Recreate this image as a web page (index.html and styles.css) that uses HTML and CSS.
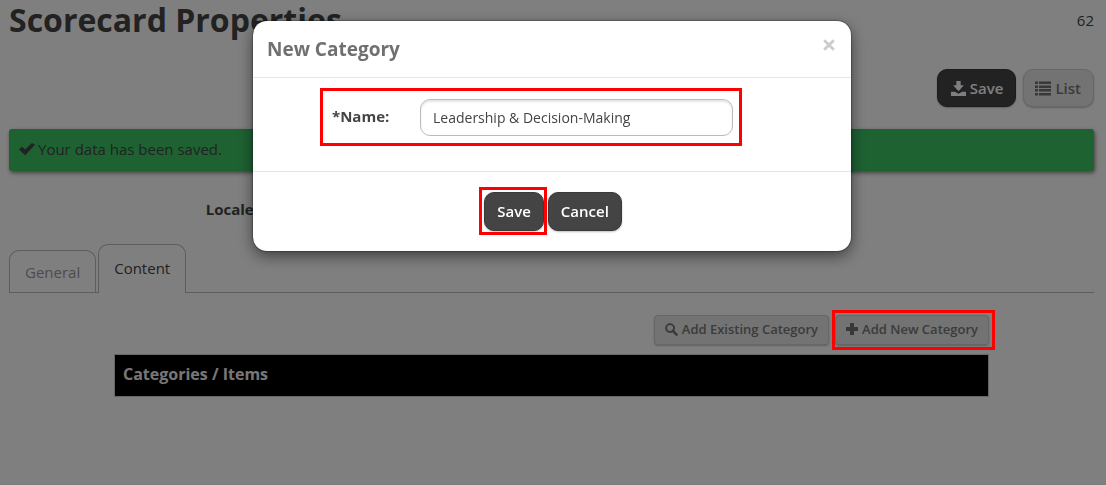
FILE: index.html
```html
<!DOCTYPE html>
<html lang="en">
<head>
<meta charset="utf-8">
<title>Scorecard Properties</title>
<link rel="stylesheet" href="styles.css">
</head>
<body>
<main class="page">
  <header class="page-header">
    <h1 class="page-title">Scorecard Properties</h1>
    <span class="page-count">62</span>
  </header>
  <div class="toolbar">
    <button type="button" class="btn btn-dark btn-save"><svg class="icon" viewBox="0 0 14 14" aria-hidden="true"><path d="M5 0h4v4h3L7 9.500 2 4h3zM0 10h3.500L7 12l3.500-2H14v4H0z"/></svg>Save</button>
    <button type="button" class="btn btn-light btn-list"><svg class="icon icon-wide" viewBox="0 0 16 14" aria-hidden="true"><path d="M0 0h3v2.500H0zM4 0h12v2.500H4zM0 4h3v2.500H0zM4 4h12v2.500H4zM0 7.500h3V10H0zM4 7.500h12V10H4zM0 11.500h3V14H0zM4 11.500h12V14H4z"/></svg>List</button>
  </div>
  <div class="alert" role="status"><svg class="icon icon-check" viewBox="0 0 16 14" aria-hidden="true"><path d="M0 7.500l3-2.700 3 2.700L13 1l3 1.800L6.200 13.200z"/></svg>Your data has been saved.</div>
  <div class="locale">Locale:</div>
  <nav class="tabs">
    <a class="tab" href="#general">General</a>
    <a class="tab tab-active" href="#content" aria-current="page">Content</a>
  </nav>
  <section class="content">
    <div class="actions">
      <button type="button" class="btn btn-light btn-small"><svg class="icon icon-search" viewBox="0 0 14 14" aria-hidden="true"><circle cx="5.500" cy="5.500" r="4.300" fill="none" stroke="currentColor" stroke-width="2"/><path d="M8.500 8.500l4 4" stroke="currentColor" stroke-width="2.600" stroke-linecap="round"/></svg>Add Existing Category</button>
      <span class="callout callout-action"><button type="button" class="btn btn-light btn-small"><svg class="icon icon-plus" viewBox="0 0 12 12" aria-hidden="true"><path d="M4 0h4v4h4v4H8v4H4V8H0V4h4z"/></svg>Add New Category</button></span>
    </div>
    <table class="categories">
      <thead><tr><th scope="col">Categories / Items</th></tr></thead>
    </table>
  </section>
</main>
<div class="backdrop">
  <form class="modal" role="dialog" aria-modal="true" aria-labelledby="modal-title">
    <div class="modal-header">
      <h2 class="modal-title" id="modal-title">New Category</h2>
      <button type="button" class="close" aria-label="Close"><svg class="close-icon" viewBox="0 0 10 10" aria-hidden="true"><path d="M1 1l8 8M9 1l-8 8" stroke="currentColor" stroke-width="2.400"/></svg></button>
    </div>
    <div class="modal-body">
      <div class="callout callout-field">
        <label class="field-label" for="name">*Name:</label>
        <input class="field-input" id="name" type="text" value="Leadership &amp; Decision-Making">
      </div>
    </div>
    <div class="modal-footer">
      <span class="callout callout-save"><button type="button" class="btn btn-dark btn-modal">Save</button></span>
      <button type="button" class="btn btn-dark btn-modal">Cancel</button>
    </div>
  </form>
</div>
</body>
</html>
```
FILE: styles.css
```css
* { box-sizing: border-box; }

body {
  margin: 0;
  background: #fff;
  color: #444;
  font: 15px/20px "Open Sans", "Noto Sans", sans-serif;
}

.page { padding: 0 12px 0 9px; }

.page-header {
  display: flex;
  justify-content: space-between;
}
.page-title {
  margin: 0;
  font-size: 32px;
  line-height: 40px;
  font-weight: 700;
}
.page-count { padding-top: 10px; }

.toolbar {
  display: flex;
  justify-content: flex-end;
  gap: 7px;
  padding-top: 29px;
}

.btn {
  display: inline-flex;
  align-items: center;
  justify-content: center;
  gap: 4px;
  height: 38px;
  padding: 0 12px;
  border: 1px solid #393939;
  border-radius: 10px;
  font: 600 15px/20px "Open Sans", "Noto Sans", sans-serif;
  white-space: nowrap;
  box-shadow: 0 1px 2px rgba(0, 0, 0, .25);
}
.btn-dark { background: #444; color: #fff; }
.btn-light { background: #e6e6e6; color: #777; border-color: #cecece; }
.btn-save { padding: 0 12px 0 13px; }
.btn-list { padding: 0 12px 0 11px; }
.btn-small {
  height: 30px;
  padding: 0 10px 2px;
  border-radius: 4px;
  font-size: 13px;
}
.btn-modal { height: 39px; padding-bottom: 1px; }

.icon {
  flex: none;
  width: 15px;
  height: 15px;
  fill: currentColor;
}
.icon-wide { width: 16px; }
.icon-plus { width: 12px; height: 12px; }
.icon-search { width: 13px; height: 13px; }
.btn-light .icon { color: #707070; }

.alert {
  display: flex;
  align-items: center;
  gap: 3px;
  margin-top: 22px;
  padding: 10px 10px 12px;
  border-radius: 3px;
  background: #3cc464;
  box-shadow: 1px 2px 4px rgba(0, 0, 0, .5);
}
.icon-check { width: 16px; height: 14px; }

.locale {
  width: 249px;
  padding-top: 28px;
  text-align: right;
  font-weight: 700;
}

.tabs {
  display: flex;
  align-items: flex-end;
  gap: 2px;
  margin-top: 25px;
  border-bottom: 1px solid #bbb;
}
.tab {
  padding: 11px 15px 10px;
  border: 1px solid #bbb;
  border-bottom: 0;
  border-radius: 10px 10px 0 0;
  color: #999;
  text-decoration: none;
}
.tab-active {
  margin-bottom: -1px;
  padding: 13px 15px 15px;
  background: #fff;
  color: #444;
}

.content { padding: 22px 105px 0; }
.actions {
  display: flex;
  justify-content: flex-end;
  gap: 6px;
}
.categories {
  width: 100%;
  margin-top: 9px;
  border: 1px solid #ccc;
  border-spacing: 0;
}
.categories th {
  padding: 9px 8px 12px;
  background: #000;
  color: #eee;
  font-size: 16px;
  line-height: 20px;
  text-align: left;
}

.backdrop {
  position: fixed;
  inset: 0;
  z-index: 1;
  padding: 21px 2px 0 0;
  background: rgba(0, 0, 0, .5);
}
.modal {
  width: 598px;
  max-width: 100%;
  margin: 0 auto;
  border-radius: 14px;
  background: #fff;
  box-shadow: 0 0 2px rgba(0, 0, 0, .8), 0 5px 15px rgba(0, 0, 0, .5);
}
.modal-header {
  display: flex;
  justify-content: space-between;
  align-items: flex-start;
  padding: 15px 16px 15px 14px;
  border-bottom: 1px solid #e5e5e5;
}
.modal-title {
  margin: 0;
  color: #707070;
  font-size: 19px;
  line-height: 26px;
  font-weight: 700;
}
.close {
  display: flex;
  padding: 3px 0;
  border: 0;
  background: none;
  color: #ccc;
}
.close-icon { width: 12px; height: 12px; }
.modal-body { padding: 21px 118px 35px 79px; }
.field-label {
  width: 88px;
  padding-top: 7px;
  font-weight: 700;
}
.field-input {
  flex: 1;
  min-width: 0;
  height: 37px;
  padding: 0 12px;
  border: 1px solid #bbb;
  border-radius: 10px;
  background: #fff;
  box-shadow: inset 0 2px 2px rgba(0, 0, 0, .1);
  color: #444;
  font: 14px/20px "Open Sans", "Noto Sans", sans-serif;
}
.modal-footer {
  display: flex;
  justify-content: center;
  gap: 4px;
  padding: 20px 15px 20px 17px;
  border-top: 1px solid #e5e5e5;
}

/* Red frames that point out the controls to use */
.callout {
  display: flex;
  position: relative;
}
.callout::after {
  content: "";
  position: absolute;
  z-index: 2;
  border: 3px solid #f00;
  pointer-events: none;
}
.callout-action::after { inset: -5px -6px -5px -3px; }
.callout-field::after { inset: -11px -9px -10px -12px; }
.callout-save::after { inset: -5px -3px -4px -5px; }
```
